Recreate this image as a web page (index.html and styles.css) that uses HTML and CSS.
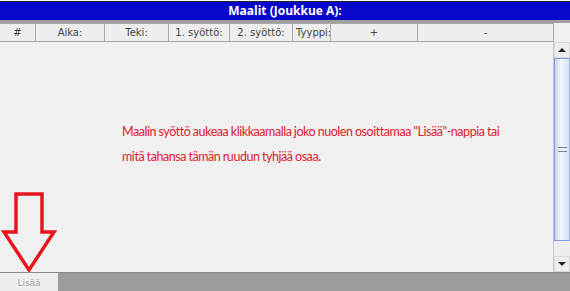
FILE: index.html
```html
<!DOCTYPE html>
<html lang="fi">
<head>
  <meta charset="UTF-8" />
  <title>Maalit</title>
  <link rel="stylesheet" href="styles.css">
</head>
<body>
  <div class="panel">
    <div class="title">Maalit (Joukkue A):</div>
    <div class="header">
      <div class="cell c-num">#</div>
      <div class="cell c-time">Aika:</div>
      <div class="cell c-who">Teki:</div>
      <div class="cell c-a1">1. syöttö:</div>
      <div class="cell c-a2">2. syöttö:</div>
      <div class="cell c-type">Tyyppi:</div>
      <div class="cell c-plus">+</div>
      <div class="cell c-minus">-</div>
      <div class="corner"></div>
    </div>

    <div class="body">
      <div class="list">
        <p class="hint">Maalin syöttö aukeaa klikkaamalla joko nuolen osoittamaa "Lisää"-nappia tai<br>mitä tahansa tämän ruudun tyhjää osaa.</p>
        <svg class="arrow" width="60" height="90" viewBox="0 0 60 90">
          <polygon points="16,12 42,12 42,50 54,50 29,88 4,50 16,50" fill="none" stroke="#e8141e" stroke-width="3.5" stroke-linejoin="miter" />
        </svg>
      </div>
      <div class="scroll">
        <div class="sb-btn"><span class="tri up"></span></div>
        <div class="track">
          <div class="thumb"><span class="grip"></span></div>
        </div>
        <div class="sb-btn"><span class="tri down"></span></div>
      </div>
    </div>

    <div class="footer">
      <button class="add">Lisää</button>
    </div>
  </div>
</body>
</html>
```

FILE: styles.css
```css
body {
  margin: 0;
  background: #f0f0f0;
  font-family: Tahoma, "DejaVu Sans", sans-serif;
}

.panel {
  width: 570px;
  height: 291px;
  display: flex;
  flex-direction: column;
  border-top: 1px solid #fff;
}

.title {
  border-top: 1px solid #222;
  height: 18px;
  background: #0808cc;
  color: #fff;
  font-family: "Open Sans", sans-serif;
  font-weight: bold;
  font-size: 12px;
  line-height: 18px;
  text-align: center;
  border-bottom: 3px solid #a0a0a0;
}

.header {
  display: flex;
  height: 19px;
}

.cell {
  box-sizing: border-box;
  height: 19px;
  border: 1px solid #a8a8a8;
  border-left: none;
  background: #eeeeee;
  color: #444;
  font-size: 10px;
  line-height: 17px;
  text-align: center;
  overflow: hidden;
  white-space: nowrap;
}

.c-num { width: 36px; }
.c-time { width: 69px; }
.c-who { width: 64px; }
.c-a1 { width: 61px; }
.c-a2 { width: 63px; }
.c-type { width: 38px; text-align: left; padding-left: 3px; }
.c-plus { width: 87px; }
.c-minus { width: 136px; }

.corner {
  flex: 1;
  background: #f0f0f0;
}

.body {
  flex: 1;
  display: flex;
  min-height: 0;
}

.list {
  flex: 1;
  position: relative;
}

.hint {
  margin: 77px 0 0 122px;
  white-space: nowrap;
  color: #e0202a;
  font-family: Lato, sans-serif;
  font-size: 12.5px;
  letter-spacing: -0.45px;
  word-spacing: -0.3px;
  line-height: 25px;
}

.arrow {
  position: absolute;
  left: 0;
  top: 140px;
}

.scroll {
  width: 16px;
  display: flex;
  flex-direction: column;
  border-left: 1px solid #c8c8d0;
}

.sb-btn {
  height: 16px;
  background: #eeeeee;
  display: flex;
  align-items: center;
  justify-content: center;
  border: 1px solid #d8d8d8;
  box-sizing: border-box;
}

.tri {
  width: 0;
  height: 0;
  border-left: 4px solid transparent;
  border-right: 4px solid transparent;
}

.tri.up { border-bottom: 4px solid #222; }
.tri.down { border-top: 4px solid #222; }

.track {
  flex: 1;
  background: #eeeeee;
  padding-bottom: 15px;
  display: flex;
}

.thumb {
  flex: 1;
  box-sizing: border-box;
  border: 1px solid #7f9ddb;
  border-right-color: #a0b4dc;
  background: linear-gradient(to right, #c4d4f0, #f4f8ff 45%, #d4e0f4);
  display: flex;
  align-items: center;
  justify-content: center;
}

.grip {
  width: 9px;
  height: 3px;
  border-top: 1px solid #7080a0;
  border-bottom: 1px solid #7080a0;
}

.footer {
  height: 19px;
  border-top: 1px solid #8a8a8a;
  background: #9c9c9c;
  display: flex;
}

.add {
  width: 58px;
  height: 19px;
  margin: 0;
  padding: 0;
  border: none;
  background: #eeeeee;
  color: #a0a0a0;
  font-family: Tahoma, "DejaVu Sans", sans-serif;
  font-size: 9px;
}
```
